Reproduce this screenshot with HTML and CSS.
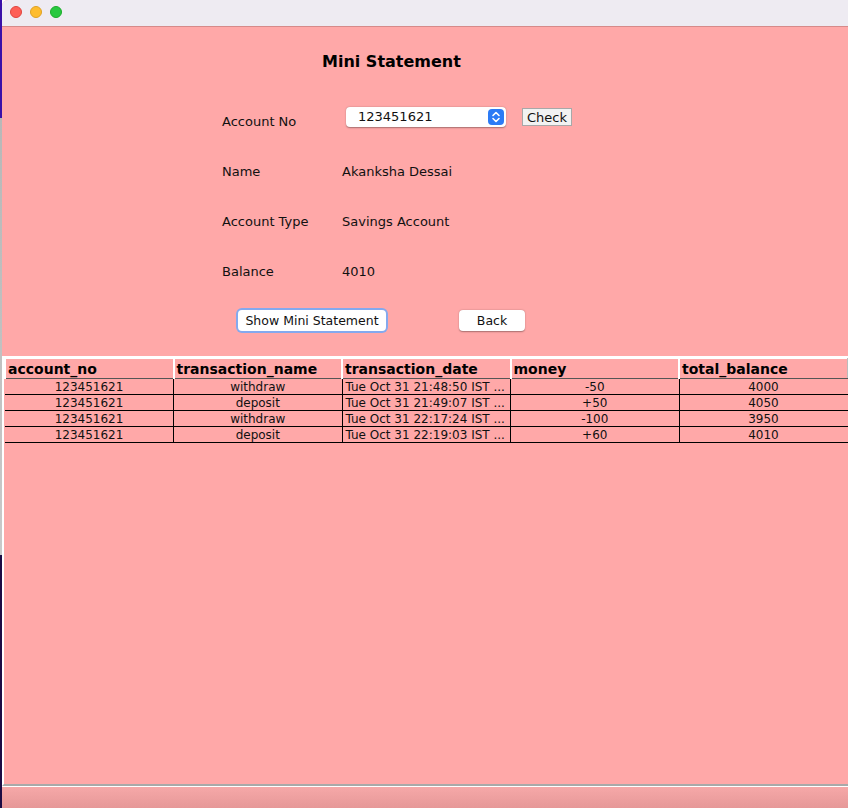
FILE: index.html
```html
<!DOCTYPE html>
<html>
<head>
<meta charset="utf-8">
<link rel="stylesheet" href="styles.css">
</head>
<body>
<div class="screen">
  <div class="desktop-strip"></div>
  <div class="window">
    <div class="titlebar">
      <span class="light red"></span>
      <span class="light yellow"></span>
      <span class="light green"></span>
    </div>
    <div class="content">
      <div class="form">
        <h1 class="title">Mini Statement</h1>
        <div class="row">
          <span class="label">Account No</span>
          <div class="value account">
            <div class="combo">
              <span class="combo-text">123451621</span>
              <span class="combo-arrow">
                <svg width="12" height="14" viewBox="0 0 12 14"><path d="M3 5.5 L6 2.5 L9 5.5 M3 8.5 L6 11.5 L9 8.5" fill="none" stroke="#fff" stroke-width="1.6" stroke-linecap="round" stroke-linejoin="round"/></svg>
              </span>
            </div>
            <button class="check">Check</button>
          </div>
        </div>
        <div class="row">
          <span class="label">Name</span>
          <span class="value">Akanksha Dessai</span>
        </div>
        <div class="row">
          <span class="label">Account Type</span>
          <span class="value">Savings Account</span>
        </div>
        <div class="row">
          <span class="label">Balance</span>
          <span class="value">4010</span>
        </div>
        <div class="actions">
          <button class="btn focused">Show Mini Statement</button>
          <button class="btn back">Back</button>
        </div>
      </div>
      <div class="pane">
        <table class="grid">
          <thead>
            <tr>
              <th>account_no</th>
              <th>transaction_name</th>
              <th>transaction_date</th>
              <th>money</th>
              <th>total_balance</th>
            </tr>
          </thead>
          <tbody>
            <tr><td>123451621</td><td>withdraw</td><td class="left">Tue Oct 31 21:48:50 IST ...</td><td>-50</td><td>4000</td></tr>
            <tr><td>123451621</td><td>deposit</td><td class="left">Tue Oct 31 21:49:07 IST ...</td><td>+50</td><td>4050</td></tr>
            <tr><td>123451621</td><td>withdraw</td><td class="left">Tue Oct 31 22:17:24 IST ...</td><td>-100</td><td>3950</td></tr>
            <tr><td>123451621</td><td>deposit</td><td class="left">Tue Oct 31 22:19:03 IST ...</td><td>+60</td><td>4010</td></tr>
          </tbody>
        </table>
      </div>
      <div class="bottom-bar"></div>
    </div>
  </div>
</div>
</body>
</html>
```

FILE: styles.css
```css
* { box-sizing: border-box; }
html, body { margin: 0; padding: 0; }
body {
  width: 848px;
  height: 808px;
  overflow: hidden;
  font-family: "DejaVu Sans", sans-serif;
  color: #111;
}
.screen {
  display: flex;
  width: 848px;
  height: 808px;
}
.desktop-strip {
  width: 2px;
  flex: none;
  background: linear-gradient(to bottom, #3a10a8 0, #3a10a8 118px, #b8b8b8 118px, #c9c9c9 555px, #1c0c44 555px, #1c0c44 808px);
}
.window {
  flex: 1;
  display: flex;
  flex-direction: column;
  background: #ffa8a8;
  border-top-left-radius: 6px;
  overflow: hidden;
}
.titlebar {
  height: 27px;
  flex: none;
  background: #eeebf2;
  border-bottom: 1px solid #d68a8a;
  display: flex;
  align-items: center;
  padding-left: 8px;
  gap: 8px;
  padding-bottom: 2px;
}
.light {
  width: 12px;
  height: 12px;
  border-radius: 50%;
  display: block;
}
.red { background: #fe5f57; border: 0.5px solid #e0443e; }
.yellow { background: #febc2e; border: 0.5px solid #dea123; }
.green { background: #28c840; border: 0.5px solid #1aab29; }

.content {
  flex: 1;
  display: flex;
  flex-direction: column;
}
.form {
  padding-left: 220px;
  height: 329px;
  flex: none;
}
.title {
  margin: 0 0 26px 100px;
  padding-top: 26px;
  font-size: 16px;
  line-height: 18px;
  font-weight: bold;
  color: #000;
}
.row {
  height: 50px;
  display: grid;
  grid-template-columns: 120px auto;
  align-items: center;
  font-size: 13px;
  line-height: 16px;
  color: #111;
}
.account {
  display: flex;
  align-items: flex-start;
  align-self: start;
  margin-top: 10px;
  gap: 16px;
  padding-left: 4px;
}
.combo {
  width: 160px;
  height: 20px;
  background: #fff;
  border-radius: 4px;
  box-shadow: 0 0.5px 1.5px rgba(0,0,0,0.35);
  display: flex;
  align-items: center;
  justify-content: space-between;
  padding-left: 12px;
  padding-right: 2px;
  font-size: 13px;
}
.combo-arrow {
  width: 16px;
  height: 16px;
  border-radius: 4px;
  background: #2c7bf5;
  display: flex;
  align-items: center;
  justify-content: center;
}
.check {
  margin-top: 1px;
  height: 18px;
  width: 50px;
  padding: 0;
  background: #f2f2f2;
  border: 1px solid #a8a8a8;
  border-radius: 0;
  font-family: "DejaVu Sans", sans-serif;
  font-size: 13px;
  color: #111;
}
.actions {
  display: flex;
  gap: 73px;
  padding-left: 16px;
  margin-top: 13px;
}
.btn {
  height: 21px;
  padding: 0;
  background: #fff;
  border: none;
  border-radius: 4px;
  box-shadow: 0 0.5px 1.5px rgba(0,0,0,0.35);
  font-family: "DejaVu Sans", sans-serif;
  font-size: 12.5px;
  color: #111;
  white-space: nowrap;
}
.btn.focused {
  width: 148px;
  box-shadow: 0 0 0 2px #84a9ee;
}
.btn.back { width: 66px; }

.pane {
  flex: 1;
  border-top: 2px solid #fff;
  border-left: 2px solid #fff;
  border-bottom: 2px solid #a9a9a9;
}
.grid {
  width: 100%;
  table-layout: fixed;
  border-collapse: collapse;
}
.grid th {
  height: 20px;
  padding: 0 0 0 2px;
  text-align: left;
  font-size: 14px;
  font-weight: bold;
  color: #000;
  background: #ffa8a8;
  border-left: 2px solid #fff;
  border-top: 1px solid #fff;
  border-bottom: 1px solid #555;
  border-right: 1px solid #bbb;
  white-space: nowrap;
  overflow: hidden;
}
.grid td {
  height: 16px;
  padding: 0 2px;
  font-size: 12px;
  line-height: 14px;
  text-align: center;
  border: 1px solid #000;
  white-space: nowrap;
  overflow: hidden;
}
.grid td:first-child { border-left: none; }
.grid td:last-child { border-right: none; }
.grid td.left { text-align: left; padding-left: 3px; }

.bottom-bar {
  height: 22px;
  flex: none;
  border-top: 1px solid #fff;
  background: linear-gradient(to bottom, #f6a8a8, #e69898);
}
```
